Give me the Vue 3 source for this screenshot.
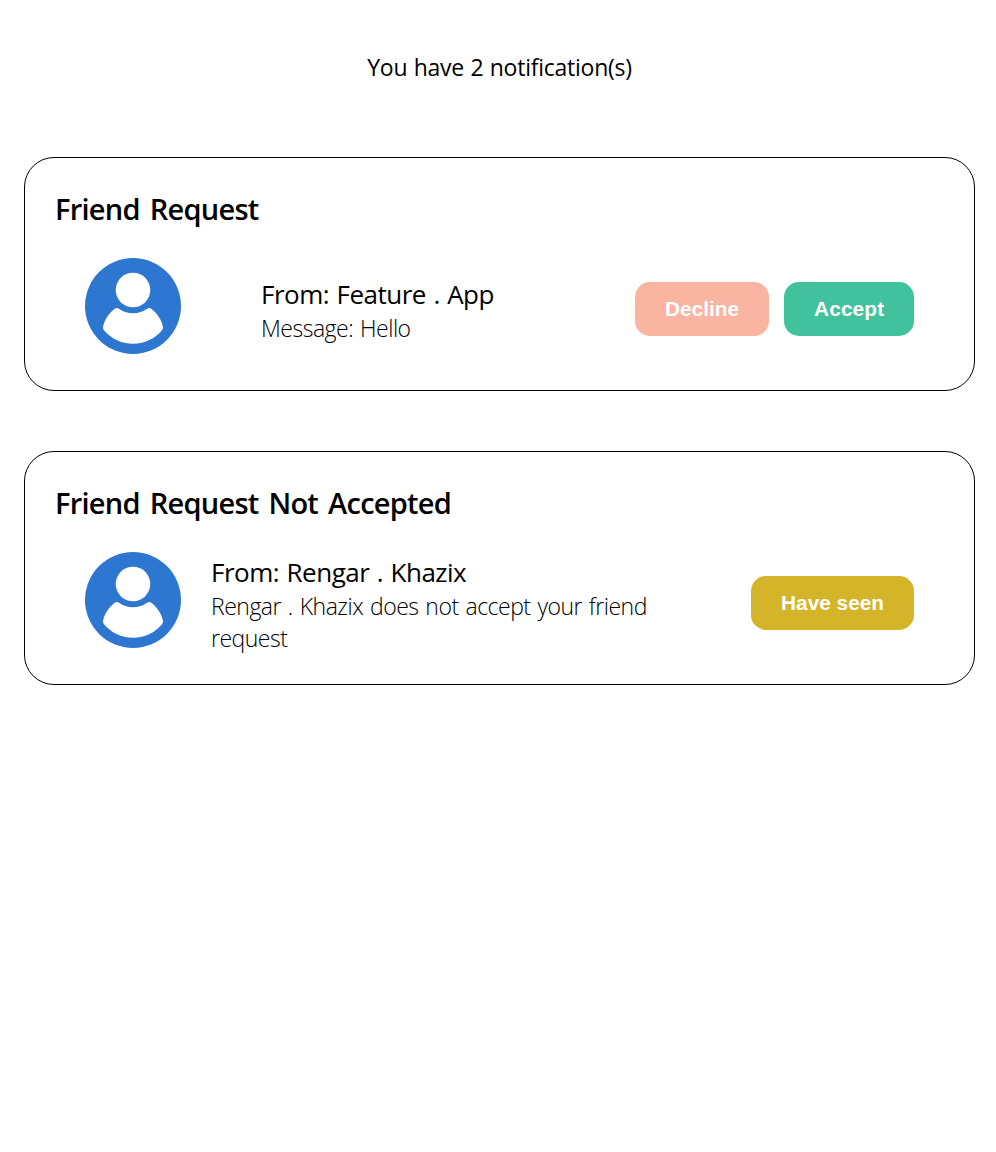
<script setup>
const notifications = [
  {
    title: 'Friend Request',
    from: 'From: Feature . App',
    lines: ['Message: Hello'],
    kind: 'request',
    actions: [
      { label: 'Decline', tone: 'decline' },
      { label: 'Accept', tone: 'accept' },
    ],
  },
  {
    title: 'Friend Request Not Accepted',
    from: 'From: Rengar . Khazix',
    lines: ['Rengar . Khazix does not accept your friend', 'request'],
    kind: 'notice',
    actions: [{ label: 'Have seen', tone: 'seen' }],
  },
]
</script>

<template>
  <main class="page">
    <p class="summary"><span>You have {{ notifications.length }} notification(s)</span></p>
    <section v-for="n in notifications" :key="n.title" class="card" :class="n.kind">
      <h2 class="title"><span>{{ n.title }}</span></h2>
      <div class="row">
        <svg class="avatar" viewBox="0 0 96 96" aria-hidden="true">
          <circle cx="48" cy="48" r="48" fill="#2e77d0" />
          <circle cx="48" cy="32" r="17.3" fill="#fff" />
          <path d="M30 50.6Q31.8 49.4 33.5 50.6Q40 55.3 48 55.3T62.5 50.6Q64.2 49.4 66 50.6C72.500 55.500 76.500 62 78 69Q78.200 70.800 77 72.200C70 80.500 60 85.700 48 85.700S26 80.500 19 72.200Q17.800 70.800 18 69C19.500 62 23.500 55.500 30 50.600Z" fill="#fff" />
        </svg>
        <div class="info">
          <p class="from"><span>{{ n.from }}</span></p>
          <p v-for="line in n.lines" :key="line" class="message"><span>{{ line }}</span></p>
        </div>
        <div class="actions">
          <button v-for="a in n.actions" :key="a.label" :class="a.tone">{{ a.label }}</button>
        </div>
      </div>
    </section>
  </main>
</template>

<style>
body {
  margin: 0;
  background: #fff;
}
</style>

<style scoped>
.page {
  box-sizing: border-box;
  width: 996px;
  padding: 51px 21px 0 24px;
  color: #000;
  font-family: "Open Sans", "Noto Sans", sans-serif;
}
p,
h2 {
  margin: 0;
  white-space: nowrap;
}
.summary {
  height: 32px;
  margin-bottom: 74px;
  font-size: 23px;
  line-height: 32px;
  letter-spacing: -0.25px;
  word-spacing: 0.7px;
  text-align: center;
}
.card {
  box-sizing: border-box;
  height: 234px;
  margin-bottom: 60px;
  padding: 30px 60px 0 30px;
  border: 1px solid #000;
  border-radius: 30px;
}
.title {
  height: 40px;
  font-size: 29px;
  font-weight: 600;
  line-height: 42px;
  letter-spacing: -0.75px;
  word-spacing: 3.2px;
}
.row {
  display: flex;
  align-items: flex-start;
  padding: 30px 0 0 30px;
}
.avatar {
  flex: none;
  width: 96px;
  height: 96px;
}
.info {
  margin-left: 30px;
  padding-top: 2px;
}
.request .info {
  margin-left: 80px;
  padding-top: 18px;
}
.from {
  font-size: 26px;
  line-height: 36px;
  letter-spacing: -0.5px;
  word-spacing: 1.2px;
}
.message {
  font-size: 23px;
  font-weight: 300;
  line-height: 32px;
  letter-spacing: -0.5px;
  word-spacing: 1.4px;
}
.actions {
  display: flex;
  gap: 15px;
  margin-left: auto;
  padding-top: 24px;
}
button {
  height: 54px;
  padding: 0 30px;
  border: 0;
  border-radius: 15px;
  color: #fff;
  font: bold 20.8px "Liberation Sans", Arial, sans-serif;
}
.decline {
  width: 134px;
  background: #f9b4a2;
}
.accept {
  width: 130px;
  letter-spacing: 0.15px;
  background: #42c29c;
}
.seen {
  background: #d4b429;
}
</style>
